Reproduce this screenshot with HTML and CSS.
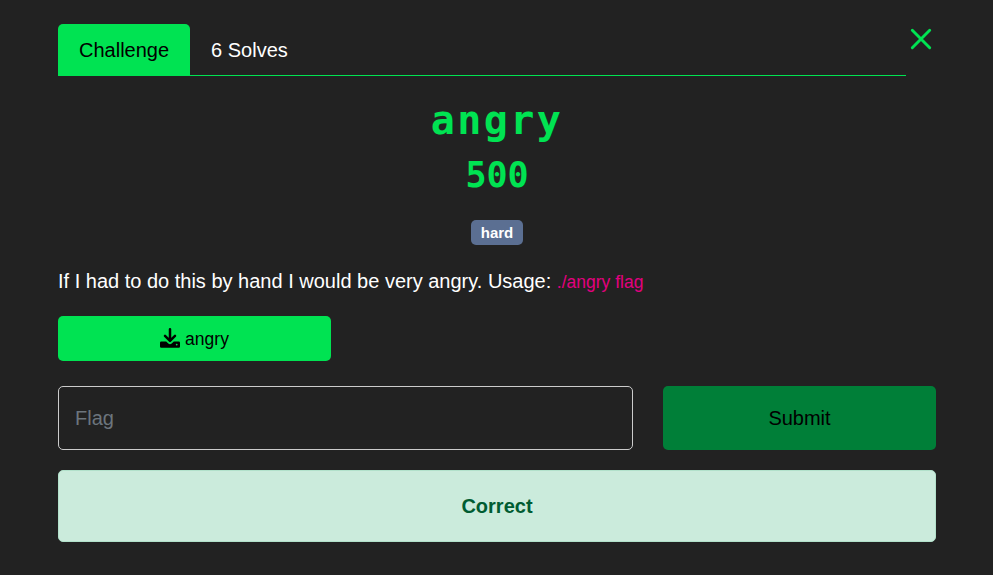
FILE: index.html
```html
<!DOCTYPE html>
<html lang="en">
<head>
<meta charset="utf-8">
<title>angry</title>
<link rel="stylesheet" href="styles.css">
</head>
<body>
<main class="modal">
  <header class="top">
    <nav class="tabs">
      <a class="tab active">Challenge</a>
      <a class="tab">6 Solves</a>
    </nav>
    <button class="close" aria-label="Close">
      <svg viewBox="0 0 30 30" width="30" height="30"><path d="M6.300 6.300 23.700 23.700M23.700 6.300 6.300 23.700" fill="none" stroke="#00e352" stroke-width="2.900" stroke-linecap="round"/></svg>
    </button>
  </header>
  <h2 class="name">angry</h2>
  <h3 class="value">500</h3>
  <div class="tags"><span class="badge">hard</span></div>
  <p class="desc">If I had to do this by hand I would be very angry. Usage: <code>./angry flag</code></p>
  <a class="file"><svg class="dl" viewBox="0 0 20 20" width="20" height="20"><path d="M10 1.300V11M5 7.800l5 5 5-5" fill="none" stroke="#000" stroke-width="2.500" stroke-linecap="round" stroke-linejoin="round"/><path fill-rule="evenodd" d="M1.200 13.500H6.200L8.300 15.400Q10 16.900 11.700 15.400L13.800 13.500H18.800Q20 13.500 20 14.700V18.600Q20 19.800 18.800 19.800H1.200Q0 19.800 0 18.600V14.700Q0 13.500 1.200 13.500ZM16.700 15.700a.9.9 0 1 0 0 1.800.9.9 0 1 0 0-1.800Z"/></svg><span>angry</span></a>
  <form class="row">
    <input class="flag" type="text" placeholder="Flag">
    <button class="submit" type="button">Submit</button>
  </form>
  <div class="alert">Correct</div>
</main>
</body>
</html>
```
FILE: styles.css
```css
* { box-sizing: border-box; }
body { margin: 0; background: #222; color: #fff; font: 20px/30px "Liberation Sans", Arial, sans-serif; }
.modal { padding: 24px 57px 0 58px; }
.top { display: flex; align-items: flex-start; }
.tabs { display: flex; width: 848px; height: 52px; border-bottom: 1px solid #00e352; }
.tab { height: 52px; padding: 11px 21px; border-radius: 5px 5px 0 0; }
.active { background: #00e352; color: #000; }
.close { display: flex; margin: 0; padding: 0; border: 0; background: none; }
.name, .value { margin: 0; text-align: center; color: #00e352; font-family: "DejaVu Sans Mono", monospace; font-weight: 700; }
.name { margin-top: 20px; font-size: 40px; line-height: 48px; letter-spacing: 2.400px; }
.value { margin-top: 10px; font-size: 35px; line-height: 42px; }
.tags { display: flex; justify-content: center; margin-top: 24px; }
.badge { height: 25px; padding: 0 10px; border-radius: 5px; background: #5b6f92; font-size: 15px; line-height: 26px; font-weight: 700; }
.desc { margin: 21px 0 0; }
.desc code { font: 17.500px "Liberation Sans", sans-serif; color: #e2007f; }
.file { display: flex; align-items: center; justify-content: center; gap: 5px; width: 273px; height: 45px; margin-top: 20px; border-radius: 5px; background: #00e352; color: #000; font-size: 17.500px; }
.dl { margin-top: -2px; overflow: visible; }
.row { display: flex; gap: 30px; margin: 25px 0 0; }
.flag { width: 575px; height: 64px; padding: 0 16px; border: 1px solid #ccc; border-radius: 5px; background: transparent; color: #fff; font: 20px "Liberation Sans", sans-serif; }
.flag::placeholder { color: #6c757d; }
.submit { width: 273px; height: 64px; padding: 0; border: 0; border-radius: 5px; background: #007f38; color: #000; font: 20px "Liberation Sans", sans-serif; }
.alert { height: 72px; margin-top: 20px; border: 1px solid #b2e1cb; border-radius: 5px; background: #cbebdc; color: #005c32; font-weight: 700; line-height: 70px; text-align: center; }
```
